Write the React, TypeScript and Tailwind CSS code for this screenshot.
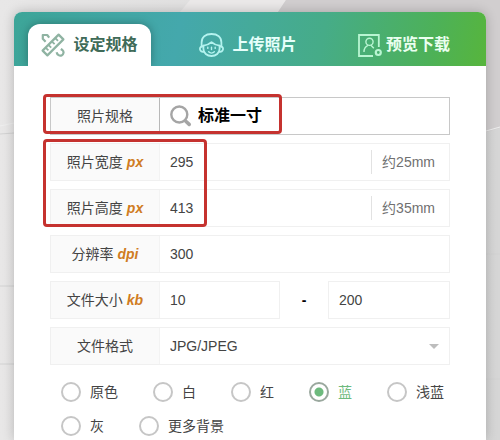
import React, { useState } from 'react';

const FIELD = 'min-w-0 flex-1 bg-transparent px-2.5 text-[#444] outline-none';

const COLORS = ['原色', '白', '红', '蓝', '浅蓝', '灰', '更多背景'];

const RulerIcon = () => (
  <svg viewBox="0 0 24 24" className="h-6 w-6 shrink-0" fill="none" stroke="#8fb3a2" strokeWidth="2.2" strokeLinejoin="round">
    <path d="M17.600 1.600l4.800 4.800L6.400 22.400l-4.800-4.800z" />
    <path d="M14.200 5l2.800 2.800M10.800 8.400l2.800 2.800M7.400 11.800l2.800 2.800M4.600 14.600l2.800 2.800" strokeWidth="1.800" />
    <path d="M8.200 4.600L6.200 2H1.800v3.800l2.800 3" />
    <path d="M15.600 19.200c.6 2.800 3 4 5 3.200 2.200-1 2.600-3.800.8-5.400l-1.600-1" />
  </svg>
);

const FaceIcon = () => (
  <svg viewBox="0 0 25 24" className="h-6 w-[25px] shrink-0" fill="none" stroke="#b4f3ef" strokeWidth="1.800" strokeLinecap="round" strokeLinejoin="round">
    <path d="M2.600 13.500V9.500C2.600 4 6.500 1 12.500 1s9.900 3 9.900 8.500v4" />
    <path d="M4.200 13.500c-2.400-.4-3.500 1-3.200 2.900.3 1.900 1.900 2.700 3.800 2.200M20.800 13.500c2.400-.4 3.500 1 3.200 2.900-.3 1.900-1.900 2.700-3.800 2.200" />
    <path d="M4.400 12.600c3.200-.2 5.900-1.400 8.100-3.400 2.200 2 4.900 3.200 8.100 3.400" />
    <path d="M4.400 12.600v3.200c0 4.200 3.600 7.200 8.100 7.200s8.100-3 8.100-7.200v-3.200" />
    <path d="M8.800 14.200v1.200M16.200 14.200v1.200M12.500 14.200v2.400M9.600 18.800c1.600 1.500 4.200 1.500 5.800 0" strokeWidth="1.400" />
  </svg>
);

const PreviewIcon = () => (
  <svg viewBox="0 0 24 24" className="h-6 w-6 shrink-0" fill="none" stroke="#b9f5d2" strokeWidth="1.800">
    <path d="M20.800 14V2H1v21h14" />
    <circle cx="11.500" cy="8.800" r="3.600" strokeWidth="1.400" />
    <path d="M6 19c0-3.400 1.600-5.600 4-6.600M13 12.200l2.800 3" strokeWidth="1.400" />
    <circle cx="20.300" cy="19.500" r="2.500" strokeWidth="2.200" />
  </svg>
);

const SearchIcon = () => (
  <svg viewBox="0 0 22 22" className="h-[22px] w-[22px] shrink-0" fill="none" stroke="#a5a5a5" strokeLinecap="round">
    <circle cx="9.300" cy="9.500" r="8" strokeWidth="2.400" />
    <path d="M15.800 16.200l3.400 3.200" strokeWidth="3.600" />
  </svg>
);

interface RowProps {
  id: string;
  label: string;
  unit?: string;
  children: React.ReactNode;
}

const Row: React.FC<RowProps> = ({ id, label, unit, children }) => (
  <div className="flex h-[38px] border border-[#f0f0f0]">
    <label htmlFor={id} className="flex w-[109px] shrink-0 items-center justify-center gap-1 border-r border-[#f3f3f3] bg-[#fafafa] text-[#444]">
      {label}
      {unit && <span className="font-bold italic text-[#d07c22]">{unit}</span>}
    </label>
    {children}
  </div>
);

const Millimetres: React.FC<{ value: string }> = ({ value }) => (
  <span className="my-1.5 flex items-center border-l border-[#e2e2e2] px-3.5 pl-2.5 text-[#707070]">{value}</span>
);

export default function App() {
  const [color, setColor] = useState('蓝');

  return (
    <div className="relative flex min-h-screen flex-col overflow-hidden bg-[linear-gradient(90deg,#e8e7e7,#d6d6d6)] px-3.5 pt-3 font-['Liberation_Sans','Noto_Sans_CJK_SC',sans-serif] text-sm">
      <svg className="absolute inset-0 h-full w-full" viewBox="0 0 500 440" preserveAspectRatio="none" aria-hidden="true">
        <path d="M190 0h96l-8 12h-98z" fill="#ebe9e9" />
        <path d="M286 0h214v128l-20 6V12H278z" fill="#d1cecf" />
        <path d="M0 134l14-1M0 286h14M0 364h14M486 254h14M486 379h14" stroke="#d2d2d2" />
        <path d="M0 126l14-3M486 131l14-4" stroke="#eeeeee" />
      </svg>

      <main className="relative flex flex-1 flex-col rounded-t-lg bg-white shadow-[0_0_12px_rgba(0,0,0,0.22)]">
        <nav className="grid grid-cols-3 overflow-hidden rounded-t-lg bg-[linear-gradient(102deg,#3da598_0%,#44a8ac_35%,#46ac88_65%,#4db158_88%,#57b53c_100%)] pt-3 pr-1 text-base font-bold">
          <button type="button" className="ml-3.5 flex h-[42px] w-[123px] items-center justify-center gap-2 justify-self-start rounded-t-xl bg-white text-[#3f6b58] shadow-[0_0_10px_rgba(0,0,0,0.3)]">
            <RulerIcon />
            设定规格
          </button>
          <button type="button" className="flex h-[42px] items-center justify-center gap-2 text-[#e6fffb]">
            <FaceIcon />
            上传照片
          </button>
          <button type="button" className="flex h-[42px] items-center justify-center gap-1 text-[#eafff0]">
            <PreviewIcon />
            预览下载
          </button>
        </nav>

        <form className="bg-white px-9 pt-[31px] pb-1">
          <div className="flex flex-col gap-2">
            <div className="relative flex h-[38px] border border-[#c8c8c8]">
              <label htmlFor="spec" className="flex w-[109px] shrink-0 items-center justify-center border-r border-[#b8b8b8] bg-[#fafafa] text-[#444]">
                照片规格
              </label>
              <div className="flex min-w-0 flex-1 items-center gap-1.5 pl-2.5">
                <SearchIcon />
                <input id="spec" defaultValue="标准一寸" className="min-w-0 flex-1 bg-transparent text-base font-bold text-black outline-none" />
              </div>
              <div className="pointer-events-none absolute -top-1 -left-2 h-10 w-[239px] rounded-sm border-[3px] border-[#c5322f]" />
            </div>

            <div className="relative flex flex-col gap-2">
              <Row id="width" label="照片宽度" unit="px">
                <input id="width" defaultValue="295" className={FIELD} />
                <Millimetres value="约25mm" />
              </Row>
              <Row id="height" label="照片高度" unit="px">
                <input id="height" defaultValue="413" className={FIELD} />
                <Millimetres value="约35mm" />
              </Row>
              <div className="pointer-events-none absolute -top-1 -left-[7px] h-[88px] w-[164px] rounded-sm border-[3px] border-[#c5322f]" />
            </div>

            <Row id="dpi" label="分辨率" unit="dpi">
              <input id="dpi" defaultValue="300" className={FIELD} />
            </Row>

            <div className="flex">
              <div className="min-w-0 flex-1">
                <Row id="size-min" label="文件大小" unit="kb">
                  <input id="size-min" defaultValue="10" className={FIELD} />
                </Row>
              </div>
              <span className="flex w-12 items-center justify-center font-bold text-black">-</span>
              <div className="flex h-[38px] w-[122px] border border-[#f0f0f0]">
                <input aria-label="文件大小" defaultValue="200" className={FIELD} />
              </div>
            </div>

            <Row id="format" label="文件格式">
              <div className="relative flex min-w-0 flex-1">
                <select id="format" className="min-w-0 flex-1 appearance-none bg-transparent px-2.5 text-[#444] outline-none">
                  <option>JPG/JPEG</option>
                </select>
                <svg viewBox="0 0 10 5" className="pointer-events-none absolute top-4 right-2.5 h-[5px] w-2.5" fill="#bdbdbd">
                  <path d="M0 0h10L5 5z" />
                </svg>
              </div>
            </Row>
          </div>

          <div className="mt-[17px] flex flex-wrap gap-x-[35px] gap-y-3.5 pl-[11px]">
            {COLORS.map(c => (
              <label key={c} className={`flex h-5 items-center gap-[9px] ${color === c ? 'text-[#6dba7d]' : 'text-[#444]'}`}>
                <input
                  type="radio"
                  name="color"
                  checked={color === c}
                  onChange={() => setColor(c)}
                  className="h-5 w-5 shrink-0 appearance-none rounded-full border-2 border-[#c6c6c6] bg-white checked:border-[#9aa89e] checked:bg-[radial-gradient(circle,#6dba7d_4px,transparent_5px)]"
                />
                {c}
              </label>
            ))}
          </div>
        </form>
      </main>
    </div>
  );
}
